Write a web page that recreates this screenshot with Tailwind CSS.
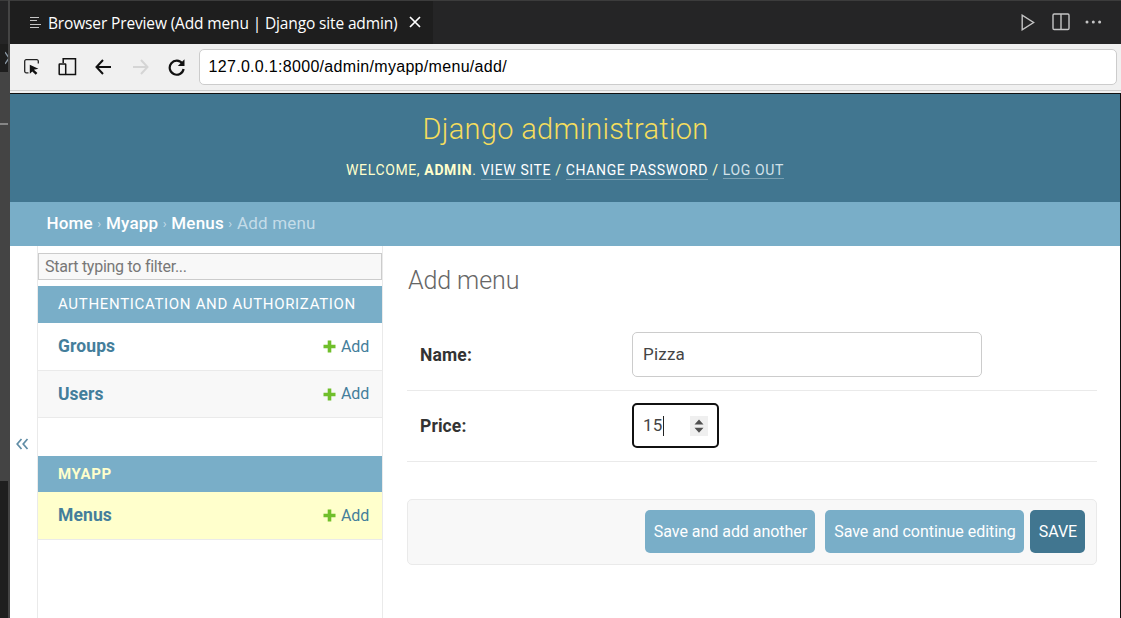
<!DOCTYPE html>
<html lang="en">
<head>
<meta charset="utf-8">
<title>Add menu | Django site admin</title>
<script src="https://cdn.jsdelivr.net/npm/@tailwindcss/browser@4"></script>
</head>
<body class="flex h-[618px] w-[1121px] overflow-hidden bg-[#1e1e1e] font-['Roboto',sans-serif]">
<!-- Edge of the neighbouring editor pane -->
<aside class="flex h-full w-[10px] shrink-0 border-r-2 border-[#444444]">
  <div class="flex w-[8px] flex-col">
    <div class="h-[44px] border-t border-[#3c3c3c] bg-[#252526]"></div>
    <div class="flex h-[28px] items-center overflow-hidden bg-[#1e1e1e]">
      <svg class="ml-[5px] shrink-0" width="8" height="14" viewBox="0 0 8 14" fill="none" stroke="#8a98a5" stroke-width="1.3"><path d="M0 1 4 7 0 13"/></svg>
    </div>
    <div class="h-[51px] bg-[#444444]"></div>
    <div class="h-[2px] bg-[#868686]"></div>
    <div class="h-[356px] bg-[#444444]"></div>
    <div class="grow bg-[#1e1e1e]"></div>
  </div>
</aside>
<div class="flex min-w-0 grow flex-col">
  <!-- Editor tabs -->
  <div class="flex h-[44px] shrink-0 border-t border-[#3c3c3c] bg-[#252526]">
    <div class="flex w-[423px] items-center bg-[#1e1e1e] pl-[20px]">
      <svg class="-mt-px shrink-0" width="12" height="13" viewBox="0 0 12 13" stroke="#c5c5c5" stroke-width="1.2"><path d="M0 1.500h9M0 4.500h7M0 8.500h11M0 11.500h9"/></svg>
      <span class="ml-[6px] w-[349px] whitespace-nowrap font-['Open_Sans',sans-serif] text-[15.5px] leading-[20px] tracking-[-0.14px] text-white">Browser Preview (Add menu | Django site admin)</span>
      <svg class="-mt-[2px] ml-[12px] shrink-0" width="12" height="12" viewBox="0 0 12 12" stroke="#ffffff" stroke-width="1.700"><path d="M1 1l10 10M11 1 1 11"/></svg>
    </div>
    <div class="flex grow items-center justify-end pb-px pr-[19px]">
      <svg width="14" height="17" viewBox="0 0 14 17" fill="none" stroke="#c5c5c5" stroke-width="1.400"><path d="M1.200 1.200v14.600L12.600 8.500z"/></svg>
      <svg class="-mt-px ml-[17px]" width="18" height="18" viewBox="0 0 18 18" fill="none" stroke="#c5c5c5" stroke-width="1.400"><rect x="1" y="1" width="16" height="15.500" rx="1.200"/><path d="M9 1v15.500"/></svg>
      <svg class="ml-[15px]" width="17" height="4" viewBox="0 0 17 4" fill="#c5c5c5"><circle cx="2" cy="2" r="1.500"/><circle cx="8.300" cy="2" r="1.500"/><circle cx="14.600" cy="2" r="1.500"/></svg>
    </div>
  </div>
  <!-- Browser toolbar -->
  <div class="flex h-[50px] shrink-0 flex-col border-b border-[#111111] bg-[#f0f0f0]">
    <div class="flex h-[47px] items-center border-b border-[#cccccc] pl-[14px] pr-[4px]">
      <svg width="16" height="16" viewBox="0 0 16 16"><path d="M4.500 13.800H2.200a1.500 1.500 0 0 1-1.500-1.500V2.200A1.500 1.500 0 0 1 2.200.7h10.600a1.500 1.500 0 0 1 1.500 1.500V4.500" fill="none" stroke="#222" stroke-width="1.300"/><path d="M5.800 5.800v9l2.500-2.300 3.400 3.200 1.700-1.600-3.500-3.300 4.500-1z" fill="#111"/></svg>
      <svg class="-mt-px ml-[18px]" width="19" height="19" viewBox="0 0 19 19" fill="none" stroke="#111" stroke-width="1.500"><path d="M5.200 6V1.700H17.500V17.500H7.500"/><rect x="1.200" y="7" width="6.500" height="10.500" rx=".5"/></svg>
      <svg class="ml-[18px]" width="17" height="16" viewBox="0 0 17 16" fill="none" stroke="#111" stroke-width="2"><path d="M8 1 1.500 8 8 15M1.500 8H16"/></svg>
      <svg class="ml-[20px]" width="17" height="16" viewBox="0 0 17 16" fill="none" stroke="#d5d5d5" stroke-width="2"><path d="M9 1l6.500 7L9 15M15.500 8H1"/></svg>
      <svg class="ml-[19px]" width="18" height="17" viewBox="0 0 18 17"><path d="M14.400 4.600A7 7 0 1 0 15.600 10" fill="none" stroke="#111" stroke-width="2.200"/><path d="M16.500 0.300V7H9.800z" fill="#111"/></svg>
      <div class="ml-[13px] flex h-[36px] grow items-center rounded-[5px] border border-[#cccccc] bg-white pl-[8.500px] font-['Liberation_Sans',sans-serif] text-[16px] tracking-[0.310px] text-black">127.0.0.1:8000/admin/myapp/menu/add/</div>
    </div>
  </div>
  <!-- Page -->
  <div class="flex grow flex-col border-r border-[#111111] bg-white">
    <header class="flex h-[108px] shrink-0 flex-col items-center bg-[#417690]">
      <h1 class="mt-[17px] pl-px text-[29px] font-light leading-[36px] tracking-[0.3px] text-[#f5dd5d]">Django administration</h1>
      <div class="mt-[14px] flex whitespace-pre text-[14px] leading-[18px] tracking-[0.63px] text-[#ffffcc]">WELCOME, <b>ADMIN</b>. <span class="h-[19px] border-b border-white/30 text-white">VIEW SITE</span> / <span class="h-[19px] border-b border-white/30 text-white">CHANGE PASSWORD</span> / <span class="h-[18px] border-b border-white/30 text-[#d3e2ea]">LOG OUT</span></div>
    </header>
    <nav class="flex h-[44px] shrink-0 items-center whitespace-pre bg-[#79aec8] pl-[36.500px] text-[17px] tracking-[0.2px] text-[#c4dce8]"><span class="font-medium text-white">Home</span><span class="w-[13px] text-center text-[13px]">›</span><span class="font-medium text-white">Myapp</span><span class="w-[13px] text-center text-[13px]">›</span><span class="font-medium text-white">Menus</span><span class="w-[13px] text-center text-[13px]">›</span><span>Add menu</span></nav>
    <div class="flex min-h-0 grow">
      <div class="flex w-[27px] shrink-0 items-start pl-[5px] pt-[191px]">
        <svg width="14" height="14" viewBox="0 0 14 14" fill="none" stroke="#5f8ca5" stroke-width="1.700"><path d="M6.500 2 2.200 7l4.300 5M12.500 2 8.200 7l4.300 5"/></svg>
      </div>
      <div class="flex w-[346px] shrink-0 flex-col border-x border-[#eaeaea] pt-[7px]">
        <div class="flex h-[27px] shrink-0 items-center border border-[#cccccc] bg-[#f8f8f8] pl-[6px] text-[16px] tracking-[-0.26px] text-[#777777]">Start typing to filter...</div>
        <div class="mt-[6px] flex h-[37px] shrink-0 items-center bg-[#79aec8] pl-[20px] text-[15px] tracking-[0.68px] text-white">AUTHENTICATION AND AUTHORIZATION</div>
        <div class="flex h-[48px] shrink-0 items-center border-b border-[#eaeaea] pl-[20px] pr-[13px] text-[#447e9b]">
          <span class="grow text-[17.500px] font-bold tracking-[0.1px]">Groups</span>
          <svg width="13" height="13" viewBox="0 0 13 13" fill="#70bf2b"><path d="M4.700.5h3.600v4.200h4.200v3.600H8.300v4.200H4.700V8.300H.5V4.700h4.200z"/></svg>
          <span class="ml-[5px] text-[16px] tracking-[-0.2px]">Add</span>
        </div>
        <div class="flex h-[47px] shrink-0 items-center border-b border-[#eaeaea] bg-[#f8f8f8] pl-[20px] pr-[13px] text-[#447e9b]">
          <span class="grow text-[17.500px] font-bold">Users</span>
          <svg width="13" height="13" viewBox="0 0 13 13" fill="#70bf2b"><path d="M4.700.5h3.600v4.200h4.200v3.600H8.300v4.200H4.700V8.300H.5V4.700h4.200z"/></svg>
          <span class="ml-[5px] text-[16px] tracking-[-0.2px]">Add</span>
        </div>
        <div class="mt-[38px] flex h-[36px] shrink-0 items-center bg-[#79aec8] pl-[20px] text-[15px] font-bold tracking-[0.65px] text-[#ffffcc]">MYAPP</div>
        <div class="flex h-[48px] shrink-0 items-center border-b border-[#eaeaea] bg-[#ffffcc] pl-[20px] pr-[13px] text-[#447e9b]">
          <span class="grow text-[17.500px] font-bold tracking-[0.1px]">Menus</span>
          <svg width="13" height="13" viewBox="0 0 13 13" fill="#70bf2b"><path d="M4.700.5h3.600v4.200h4.200v3.600H8.300v4.200H4.700V8.300H.5V4.700h4.200z"/></svg>
          <span class="ml-[5px] text-[16px] tracking-[-0.2px]">Add</span>
        </div>
      </div>
      <main class="flex grow flex-col pl-[24px] pr-[23px] pt-[18px]">
        <h2 class="h-[55px] pl-px pt-px text-[25px] font-light leading-[32px] tracking-[-0.1px] text-[#666666]">Add menu</h2>
        <div class="flex h-[72px] shrink-0 items-center border-b border-[#eaeaea] pl-[13px] text-[17px] text-[#444444]">
          <label class="w-[212px] pt-[2px] text-[17.500px] font-bold tracking-[0.15px] text-[#333333]">Name:</label>
          <div class="flex h-[45px] w-[350px] items-center rounded-[5px] border border-[#cccccc] pl-[10px] tracking-[0.2px]">Pizza</div>
        </div>
        <div class="flex h-[71px] shrink-0 items-center border-b border-[#eaeaea] pb-px pl-[13px] text-[17px] text-[#444444]">
          <label class="w-[212px] pt-[2px] text-[17.500px] font-bold tracking-[0.1px] text-[#333333]">Price:</label>
          <div class="flex h-[45px] w-[87px] items-center rounded-[5px] border-2 border-[#111111] pl-[9px] tracking-[0.2px]">15<i class="h-[20px] w-px bg-[#222222]"></i>
            <div class="ml-[26px] flex h-[20px] w-[18px] items-center justify-center bg-[#efefef]"><svg width="10" height="14" viewBox="0 0 10 14" fill="#505050"><path d="M0.500 5.500 5 0.500l4.500 5zM.5 8.800h9L5 13.800z"/></svg></div>
          </div>
        </div>
        <div class="mt-[37px] flex h-[66px] shrink-0 items-center justify-end rounded-[5px] border border-[#eaeaea] bg-[#f8f8f8] pb-px pr-[11px] text-[16px] tracking-[-0.04px] text-white">
          <div class="flex h-[43px] w-[170px] items-center justify-center rounded-[5px] bg-[#79aec8] pl-px pt-px">Save and add another</div>
          <div class="ml-[10px] flex h-[43px] w-[199px] items-center justify-center rounded-[5px] bg-[#79aec8] pl-px pt-px">Save and continue editing</div>
          <div class="ml-[6px] flex h-[43px] w-[55px] items-center justify-center rounded-[5px] bg-[#417690] pl-px pt-px">SAVE</div>
        </div>
      </main>
    </div>
  </div>
</div>
</body>
</html>
